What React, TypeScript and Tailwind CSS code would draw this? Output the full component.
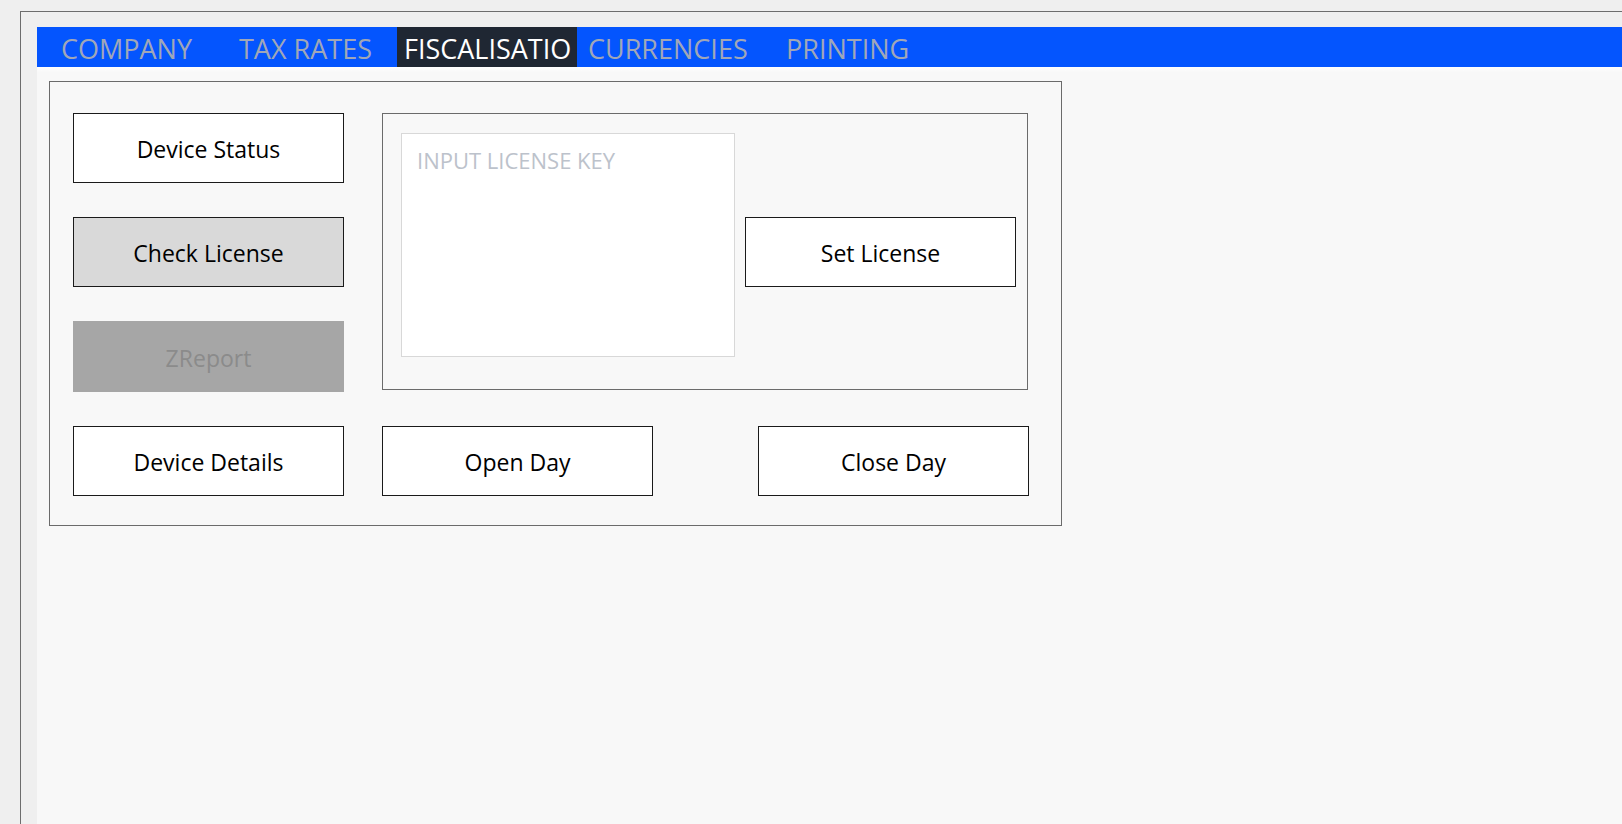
import React from "react";

const font = { fontFamily: '"Open Sans", "Noto Sans", "Liberation Sans", sans-serif' };

function Btn({ label, variant = "normal", className = "" }: { label: string; variant?: "normal" | "pressed" | "disabled"; className?: string }) {
  const v =
    variant === "pressed"
      ? "bg-[#d9d9d9] border border-[#1a1a1a] text-black"
      : variant === "disabled"
      ? "bg-[#a6a6a6] text-[#8b8b8b]"
      : "bg-white border border-[#1a1a1a] text-black";
  return (
    <div className={`flex items-center justify-center w-[271px] h-[70px] pt-[3px] text-[23px] leading-none ${v} ${className}`}>
      {label}
    </div>
  );
}

export default function App() {
  return (
    <div className="w-screen h-screen overflow-hidden bg-[#efefef]" style={font}>
      <div className="ml-[20px] mt-[11px] h-full border-l border-t border-[#6d6d6d] pl-[16px] pt-[15px] flex flex-col">
        {/* Tab bar */}
        <div className="flex h-[40px] bg-[#0455fe] text-[27px] leading-[40px] text-[#a0a7b7] whitespace-nowrap shrink-0">
          <div className="w-[178px] pl-[24px] pt-[2px]">COMPANY</div>
          <div className="w-[182px] pl-[24px] pt-[2px]">TAX RATES</div>
          <div className="w-[180px] pl-[7px] pt-[2px] bg-[#1f2733] text-white">FISCALISATIO</div>
          <div className="w-[198px] pl-[11px] pt-[2px]">CURRENCIES</div>
          <div className="pl-[11px] pt-[2px]">PRINTING</div>
        </div>
        {/* Content */}
        <div className="flex-1 bg-[#f8f8f8] pl-[12px] pt-[14px] bg-[linear-gradient(to_bottom,#ffffff_0px,#f8f8f8_5px)]">
          <div className="w-[1013px] h-[445px] border border-[#6b6b6b] pl-[23px] pt-[31px]">
            <div className="flex">
              <div className="flex flex-col gap-[34px] w-[271px]">
                <Btn label="Device Status" />
                <Btn label="Check License" variant="pressed" />
                <Btn label="ZReport" variant="disabled" className="h-[71px]" />
              </div>
              <div className="ml-[38px] w-[646px] h-[277px] border border-[#6b6b6b] flex items-center pl-[18px]">
                <div className="w-[334px] h-[224px] bg-white border border-[#d8d8d8] self-start mt-[19px] pl-[15px] pt-[11px] text-[22px] leading-[30px] text-[#bcc2cb]">
                  INPUT LICENSE KEY
                </div>
                <Btn label="Set License" className="ml-[10px]" />
              </div>
            </div>
            <div className="flex mt-[34px]">
              <Btn label="Device Details" />
              <Btn label="Open Day" className="ml-[38px] w-[270px]" />
              <Btn label="Close Day" className="ml-[105px] w-[270px]" />
            </div>
          </div>
        </div>
      </div>
    </div>
  );
}
